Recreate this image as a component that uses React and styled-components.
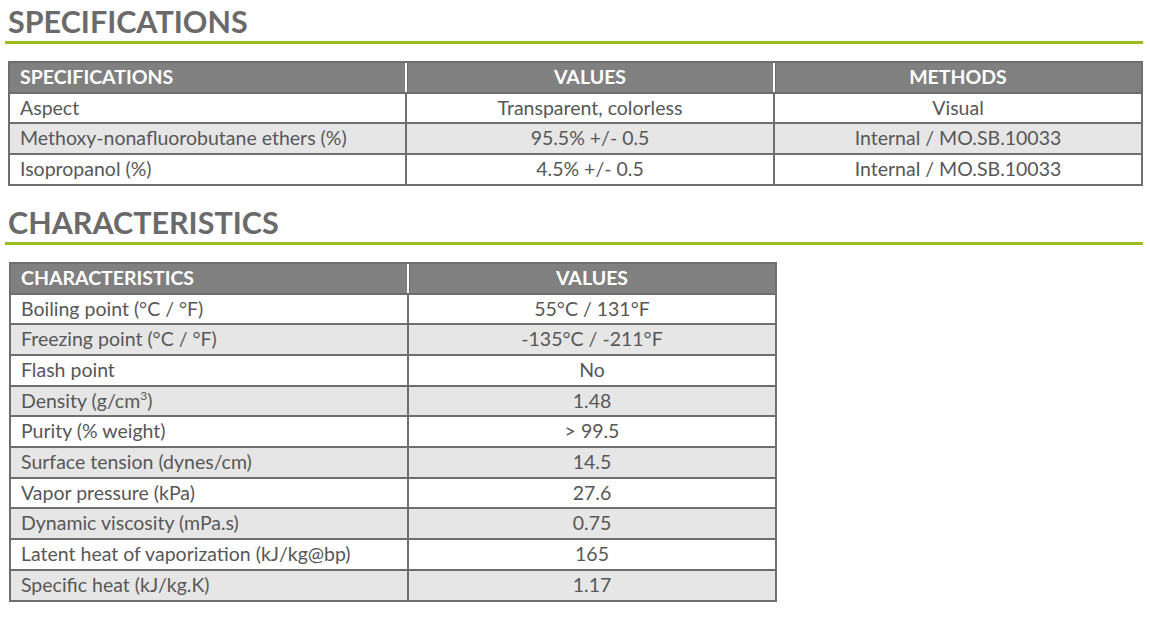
import React from 'react'
import styled, { createGlobalStyle } from 'styled-components'

const GlobalStyle = createGlobalStyle`
  body {
    margin: 0;
    background: #fff;
    font-family: Lato, "Open Sans", sans-serif;
  }
`

const specRows = [
  ['Aspect', 'Transparent, colorless', 'Visual'],
  ['Methoxy-nonafluorobutane ethers (%)', '95.5% +/- 0.5', 'Internal / MO.SB.10033'],
  ['Isopropanol (%)', '4.5% +/- 0.5', 'Internal / MO.SB.10033'],
]

const charRows = [
  ['Boiling point (°C / °F)', '55°C / 131°F'],
  ['Freezing point (°C / °F)', '-135°C / -211°F'],
  ['Flash point', 'No'],
  [<>Density (g/cm<sup>3</sup>)</>, '1.48'],
  ['Purity (% weight)', '> 99.5'],
  ['Surface tension (dynes/cm)', '14.5'],
  ['Vapor pressure (kPa)', '27.6'],
  ['Dynamic viscosity (mPa.s)', '0.75'],
  ['Latent heat of vaporization (kJ/kg@bp)', '165'],
  ['Specific heat (kJ/kg.K)', '1.17'],
]

const App = () => {
  return (
    <Page>
      <GlobalStyle />
      <Section>
        <Title>SPECIFICATIONS</Title>
        <Table $width={1135} $left={3}>
          <colgroup>
            <col style={{ width: 395 }} />
            <col style={{ width: 368 }} />
            <col />
          </colgroup>
          <thead>
            <tr>
              <th>SPECIFICATIONS</th>
              <th>VALUES</th>
              <th>METHODS</th>
            </tr>
          </thead>
          <tbody>
            {specRows.map((r, i) => (
              <tr key={i}>
                {r.map((c, j) => <td key={j}>{c}</td>)}
              </tr>
            ))}
          </tbody>
        </Table>
      </Section>

      <Section $top={15}>
        <Title>CHARACTERISTICS</Title>
        <Table $width={768} $left={4}>
          <colgroup>
            <col style={{ width: 396 }} />
            <col />
          </colgroup>
          <thead>
            <tr>
              <th>CHARACTERISTICS</th>
              <th>VALUES</th>
            </tr>
          </thead>
          <tbody>
            {charRows.map((r, i) => (
              <tr key={i}>
                {r.map((c, j) => <td key={j}>{c}</td>)}
              </tr>
            ))}
          </tbody>
        </Table>
      </Section>
    </Page>
  )
}

const Page = styled.div`
  padding: 0 7px 20px 5px;
`

const Section = styled.section`
  margin-top: ${p => p.$top || 0}px;
`

const Title = styled.h2`
  margin: 0;
  padding: 5px 0 4px 3px;
  font-size: 30.5px;
  line-height: 32px;
  font-weight: 700;
  color: #6a6a6a;
  border-bottom: 3px solid #9cbd1e;
`

const Table = styled.table`
  margin: 17px 0 0 ${p => p.$left}px;
  width: ${p => p.$width}px;
  table-layout: fixed;
  border-collapse: separate;
  border-spacing: 0;
  border: 2px solid #6e6e6e;
  font-size: 19.5px;
  color: #575757;

  th {
    background: #808080;
    color: #fff;
    font-weight: 700;
    text-align: center;
    line-height: 28.7px;
    padding: 0 10px;
  }
  th:first-child {
    text-align: left;
  }
  th + th {
    border-left: 2px solid #fff;
    box-shadow: inset 1px 0 0 #6e6e6e;
  }

  td {
    line-height: 28.7px;
    padding: 0 10px;
    text-align: center;
    border-top: 2px solid #6e6e6e;
    white-space: nowrap;
  }
  td:first-child {
    text-align: left;
  }
  td + td {
    border-left: 2px solid #6e6e6e;
  }
  tbody tr:nth-child(even) td {
    background: #e6e6e6;
  }

  sup {
    font-size: 12px;
    line-height: 0;
    vertical-align: 8px;
  }
`

export default App
